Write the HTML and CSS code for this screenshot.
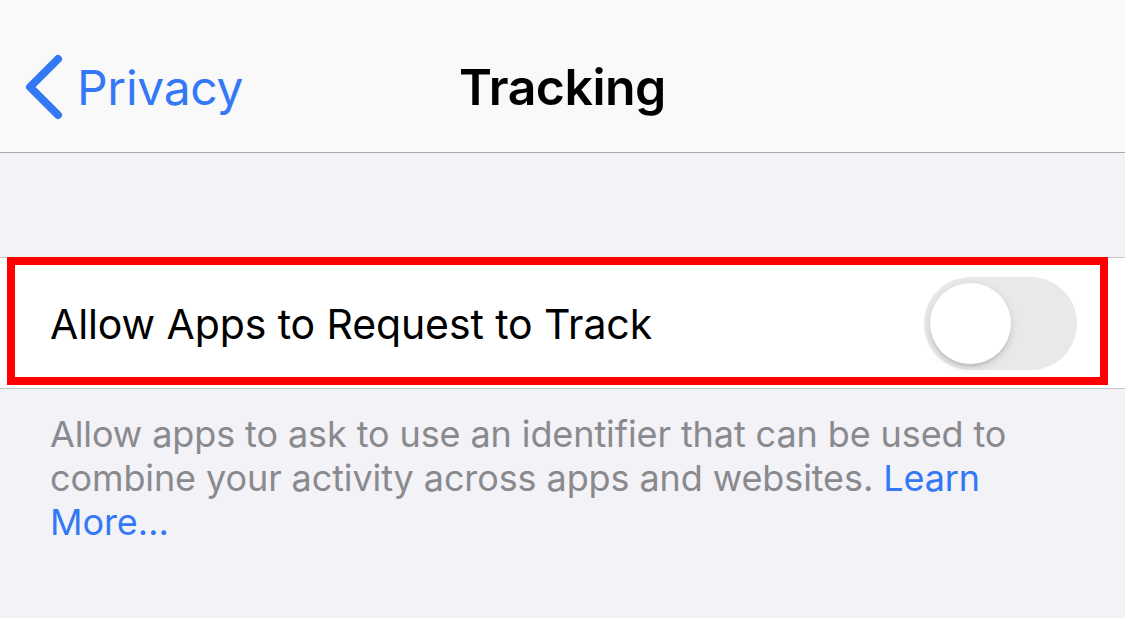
FILE: index.html
```html
<!DOCTYPE html>
<html lang="en">
<head>
  <meta charset="UTF-8" />
  <title>Tracking</title>
  <link rel="stylesheet" href="styles.css">
</head>
<body>
  <header class="navbar">
    <a class="back" href="#">
      <svg class="chevron" width="40" height="66" viewBox="0 0 40 66">
        <path d="M34 5 L6 33 L34 61" fill="none" stroke="#3478f6" stroke-width="8" stroke-linecap="round" stroke-linejoin="round"/>
      </svg>
      <span>Privacy</span>
    </a>
    <h1 class="title">Tracking</h1>
  </header>

  <main class="content">
    <section class="group">
      <div class="cell">
        <span class="cell-label">Allow Apps to Request to Track</span>
        <div class="switch">
          <div class="knob"></div>
        </div>
      </div>
      <div class="highlight"></div>
    </section>
    <p class="footer">
      Allow apps to ask to use an identifier that can be used to combine your activity across apps and websites. <a href="#">Learn More…</a>
    </p>
  </main>
</body>
</html>
```

FILE: styles.css
```css
body {
  margin: 0;
  background-color: #f2f2f7;
  font-family: Inter, "Noto Sans", sans-serif;
  height: 618px;
  overflow: hidden;
}
.navbar {
  height: 152px;
  background-color: #f9f9f9;
  border-bottom: 1px solid #a7a7aa;
  display: flex;
  align-items: center;
  justify-content: center;
  position: relative;
}
.back {
  position: absolute;
  left: 24px;
  top: 54px;
  display: flex;
  align-items: center;
  gap: 13px;
  color: #3478f6;
  text-decoration: none;
  font-size: 48px;
  letter-spacing: -0.3px;
}
.chevron {
  display: block;
}
.title {
  margin: 21px 0 0 0;
  font-size: 50px;
  font-weight: 600;
  letter-spacing: -0.5px;
  color: #000;
}
.content {
  padding-top: 104px;
}
.group {
  position: relative;
}
.cell {
  height: 130px;
  background-color: #fff;
  border-top: 1px solid #c8c7cc;
  border-bottom: 1px solid #c8c7cc;
  display: flex;
  align-items: center;
  justify-content: space-between;
  padding: 0 48px 0 50px;
}
.cell-label {
  font-size: 41px;
  color: #000;
  letter-spacing: -0.1px;
  padding-top: 2px;
}
.switch {
  width: 153px;
  height: 93px;
  border-radius: 47px;
  background-color: #e9e9eb;
  display: flex;
  align-items: center;
  padding-left: 6px;
  box-sizing: border-box;
}
.knob {
  width: 81px;
  height: 81px;
  border-radius: 50%;
  background-color: #fff;
  box-shadow: 0 3px 8px rgba(0, 0, 0, 0.15), 0 3px 1px rgba(0, 0, 0, 0.06);
}
.highlight {
  position: absolute;
  left: 7px;
  top: 0;
  right: 17px;
  bottom: 4px;
  border: 8px solid #ff0000;
}
.footer {
  margin: 23px 0 0 0;
  padding: 0 50px;
  font-size: 36px;
  line-height: 44px;
  letter-spacing: -0.1px;
  color: #8a8a8e;
}
.footer a {
  color: #3478f6;
  text-decoration: none;
}
```
